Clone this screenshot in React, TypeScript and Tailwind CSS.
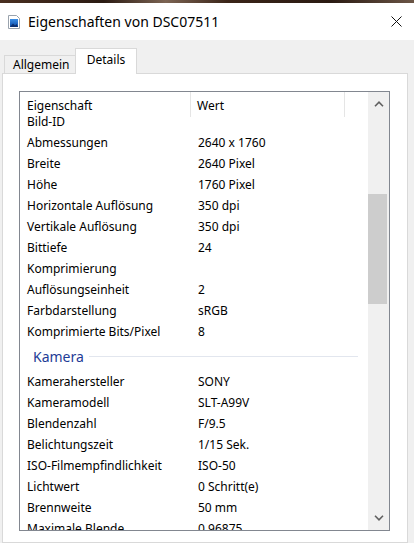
import { ReactElement } from 'react'

type Row = [string, string]

const imageRows: Row[] = [
  ['Abmessungen', '2640 x 1760'],
  ['Breite', '2640 Pixel'],
  ['Höhe', '1760 Pixel'],
  ['Horizontale Auflösung', '350 dpi'],
  ['Vertikale Auflösung', '350 dpi'],
  ['Bittiefe', '24'],
  ['Komprimierung', ''],
  ['Auflösungseinheit', '2'],
  ['Farbdarstellung', 'sRGB'],
  ['Komprimierte Bits/Pixel', '8'],
]

const cameraRows: Row[] = [
  ['Kamerahersteller', 'SONY'],
  ['Kameramodell', 'SLT-A99V'],
  ['Blendenzahl', 'F/9.5'],
  ['Belichtungszeit', '1/15 Sek.'],
  ['ISO-Filmempfindlichkeit', 'ISO-50'],
  ['Lichtwert', '0 Schritt(e)'],
  ['Brennweite', '50 mm'],
  ['Maximale Blende', '0.96875'],
]

function PropRow({ label, value }: { label: string; value: string }): ReactElement {
  return (
    <div className="grid h-[21px] shrink-0 grid-cols-[178px_1fr] text-[12px] leading-[21px] text-black">
      <span className="truncate pl-[7px]">{label}</span>
      <span className="truncate">{value}</span>
    </div>
  )
}

function FileIcon(): ReactElement {
  return (
    <svg width="14" height="14" viewBox="0 0 14 14">
      <path d="M1.5 0.5h8l3 3v10h-11z" fill="#fff" stroke="#9aa3ad" />
      <defs>
        <linearGradient id="pic" x1="0" y1="0" x2="0" y2="1">
          <stop offset="0" stopColor="#3a8ee6" />
          <stop offset="1" stopColor="#0b4aa8" />
        </linearGradient>
      </defs>
      <rect x="3" y="4" width="8" height="8" fill="url(#pic)" />
      <path d="M3 12l3-3.5 2 2 1.5-1.5 1.5 3z" fill="#0a2f70" />
    </svg>
  )
}

function Chevron({ up }: { up?: boolean }): ReactElement {
  return (
    <svg width="10" height="6" viewBox="0 0 10 6">
      <polyline
        points={up ? '1,5.2 5,1.2 9,5.2' : '1,0.8 5,4.8 9,0.8'}
        fill="none"
        stroke="#606060"
        strokeWidth="1.6"
      />
    </svg>
  )
}

export default function App(): ReactElement {
  return (
    <div className="flex h-[543px] w-[414px] flex-col overflow-hidden bg-[#f0f0f0] font-['Noto_Sans',sans-serif]">
      {/* strip of the desktop wallpaper above the window */}
      <div className="h-[3px] shrink-0 bg-[linear-gradient(90deg,#4a2f20,#2a1a12_25%,#7c6453_40%,#3a2418_55%,#2a1a12_80%,#6b5546)]" />

      {/* title bar */}
      <div className="flex h-[37px] shrink-0 items-center bg-white pl-[7px] pr-[12px]">
        <FileIcon />
        <span className="ml-[7px] text-[14px] text-black">Eigenschaften von DSC07511</span>
        <svg className="ml-auto" width="11" height="11" viewBox="0 0 11 11">
          <path d="M0.5 0.5l10 10M10.5 0.5l-10 10" stroke="#111" strokeWidth="1" />
        </svg>
      </div>

      {/* tabs */}
      <div className="flex h-[33px] shrink-0 items-end pl-[4px] text-[12px] text-black">
        <div className="flex h-[18px] w-[71px] items-center border-l border-t border-[#d9d9d9] pl-[8px] leading-none">
          Allgemein
        </div>
        <div className="relative z-10 -mb-px flex h-[26px] w-[62px] items-center justify-center border-x border-t border-[#d9d9d9] bg-white pb-[3px]">
          Details
        </div>
      </div>

      {/* tab page */}
      <div className="ml-[2px] w-[406px] flex-1 border border-[#d9d9d9] bg-white">
        <div className="ml-[16px] mt-[17px] flex h-[440px] w-[371px] border border-[#828790]">
          <div className="flex min-w-0 flex-1 flex-col overflow-hidden">
            <div className="flex h-[25px] shrink-0 text-[12px] leading-[25px] text-black">
              <span className="w-[171px] border-r border-[#e5e5e5] pl-[7px] pt-px">Eigenschaft</span>
              <span className="w-[154px] border-r border-[#e5e5e5] pl-[6px] pt-px">Wert</span>
            </div>
            {/* first row sits tight under the header, list is scrolled a bit */}
            <div className="h-[15px] shrink-0 pl-[7px] text-[12px] leading-[9px] text-black">Bild-ID</div>
            {imageRows.map(([label, value]) => (
              <PropRow key={label} label={label} value={value} />
            ))}
            <div className="flex h-[29px] shrink-0 items-center pl-[13px] pr-[10px]">
              <span className="text-[14px] leading-none text-[#1e3c96]">Kamera</span>
              <div className="ml-[5px] h-px flex-1 bg-[#e2e6ee]" />
            </div>
            {cameraRows.map(([label, value]) => (
              <PropRow key={label} label={label} value={value} />
            ))}
          </div>

          {/* vertical scrollbar */}
          <div className="flex w-[21px] shrink-0 flex-col bg-[#f0f0f0]">
            <div className="flex h-[24px] shrink-0 items-center justify-center">
              <Chevron up />
            </div>
            <div className="flex-1">
              <div className="mt-[78px] h-[110px] w-[19px] bg-[#cdcdcd]" />
            </div>
            <div className="flex h-[24px] shrink-0 items-center justify-center">
              <Chevron />
            </div>
          </div>
        </div>
      </div>
    </div>
  )
}
